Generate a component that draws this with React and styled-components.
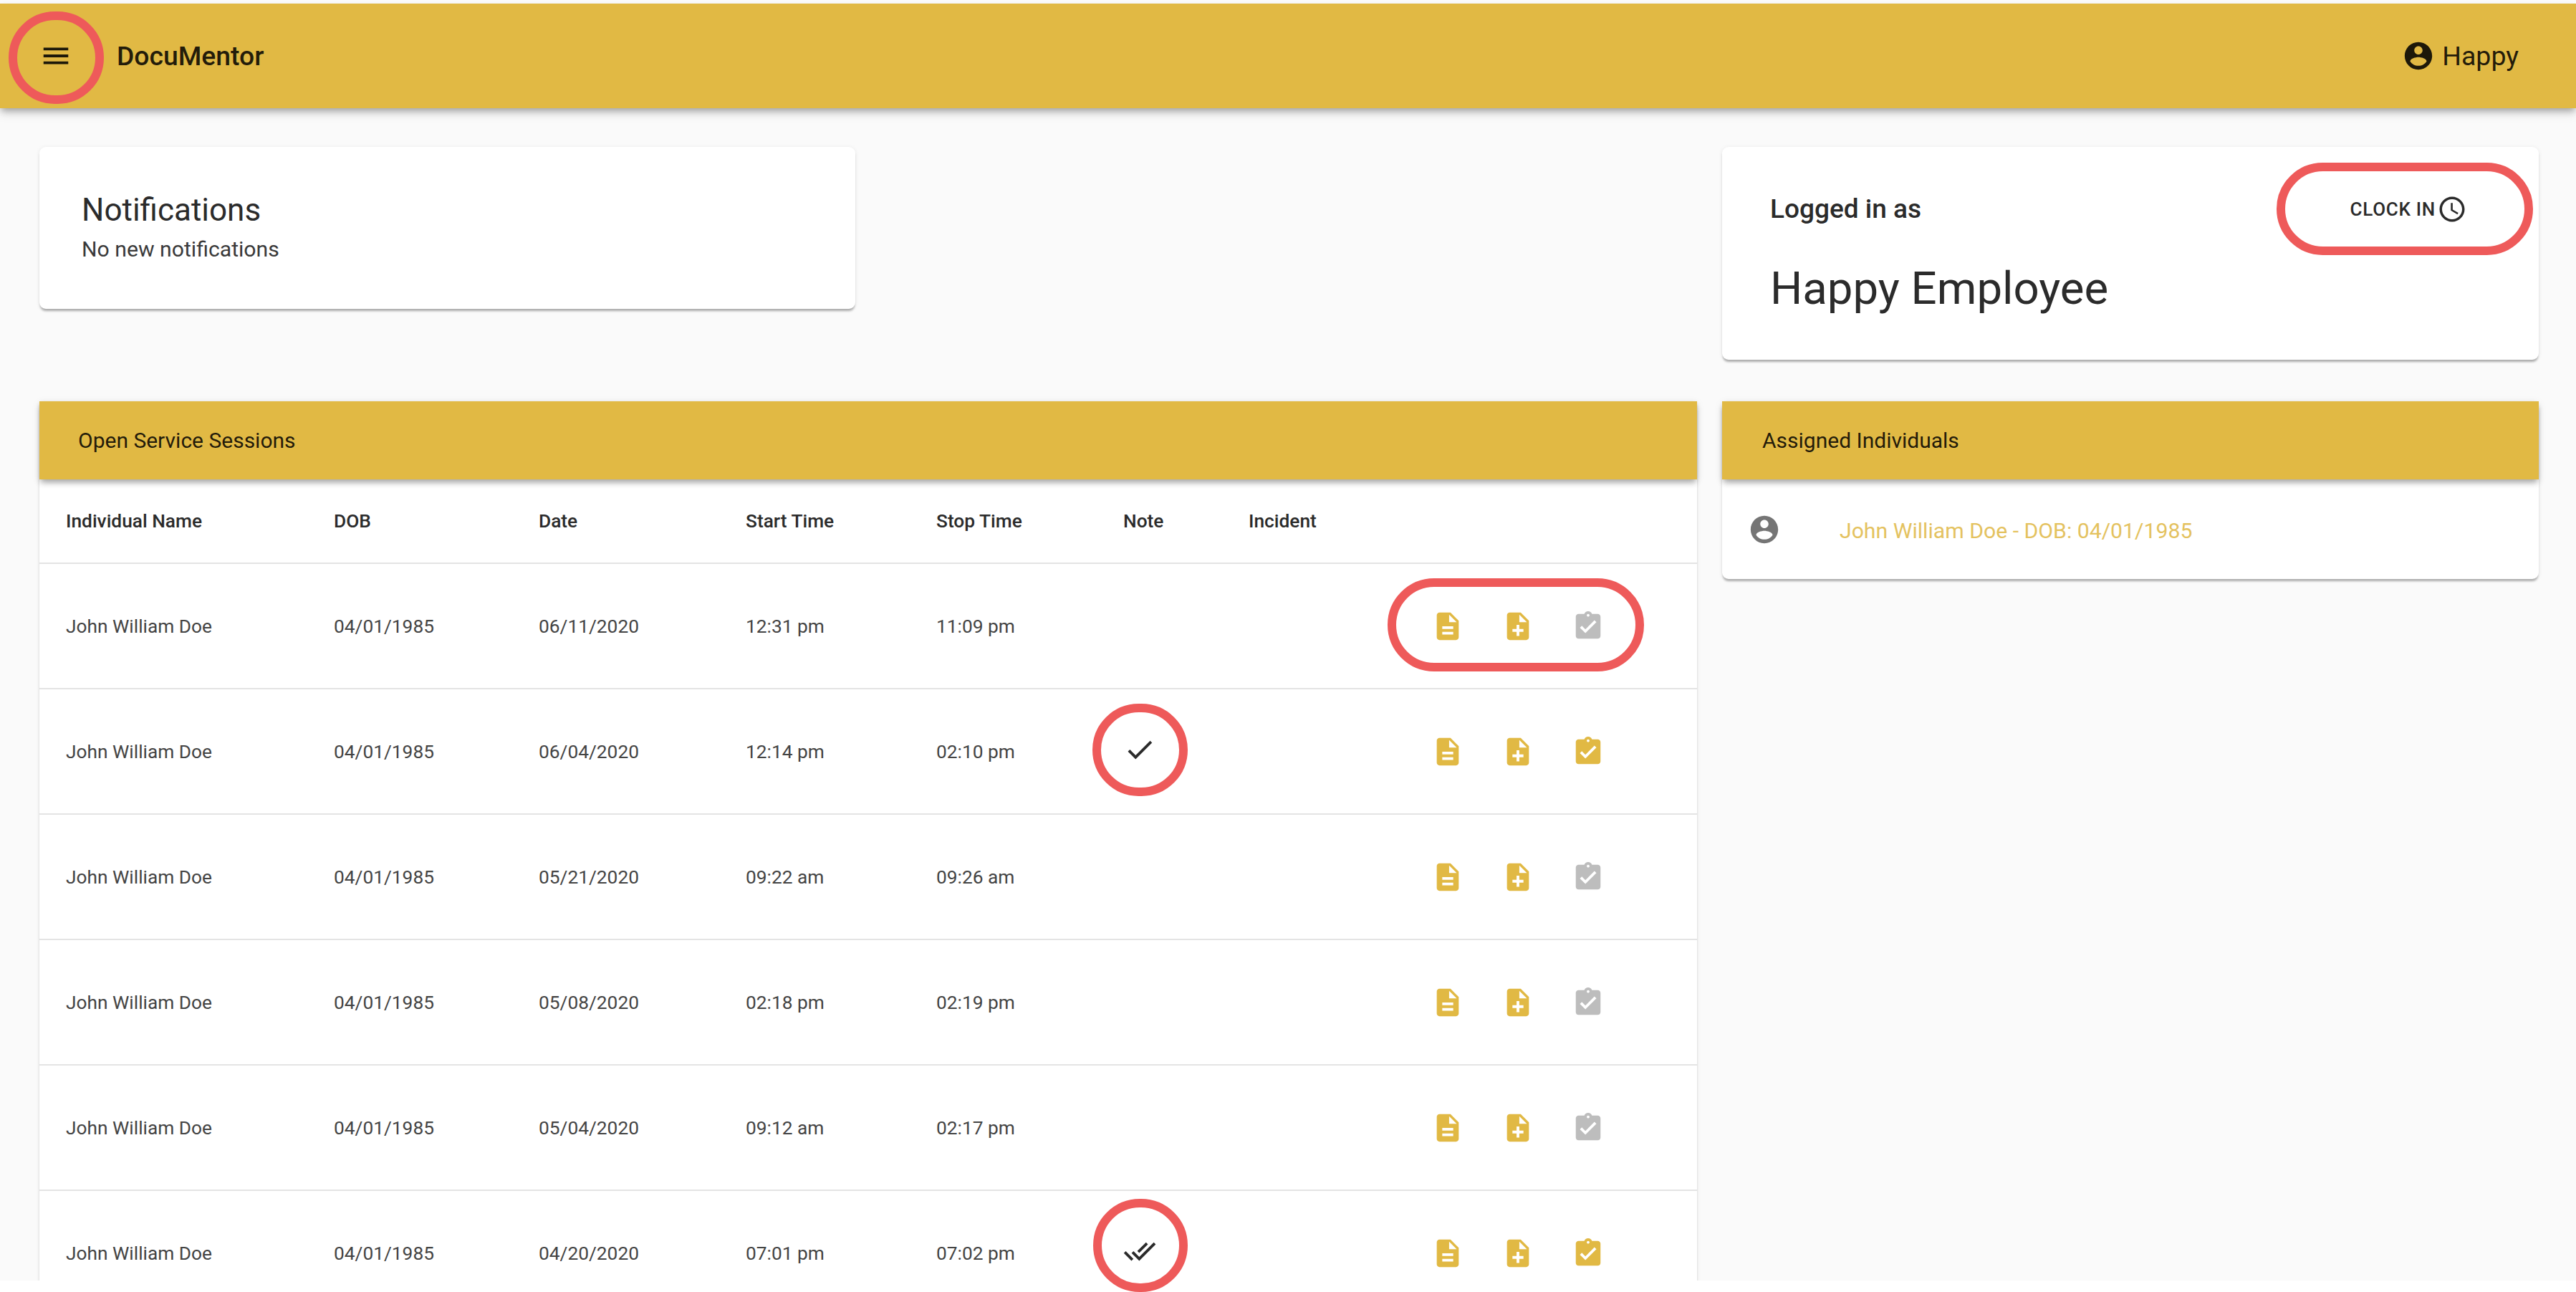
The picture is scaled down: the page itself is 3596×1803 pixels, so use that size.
import React from "react";
import styled, { createGlobalStyle } from "styled-components";

const GOLD = "#e1b944";
const RED = "#ee5a5a";
const TEXT = "rgba(0, 0, 0, 0.87)";
const ROW_COLUMNS = "374px 286px 289px 266px 261px 175px 255px 1fr";

const ICONS = {
  menu: "M3 18h18v-2H3v2zm0-5h18v-2H3v2zm0-7v2h18V6H3z",
  account:
    "M12 2C6.48 2 2 6.48 2 12s4.48 10 10 10 10-4.48 10-10S17.52 2 12 2zm0 3c1.66 0 3 1.34 3 3s-1.34 3-3 3-3-1.34-3-3 1.34-3 3-3zm0 14.2c-2.5 0-4.71-1.28-6-3.22.03-1.99 4-3.08 6-3.08 1.99 0 5.97 1.09 6 3.08-1.29 1.94-3.5 3.22-6 3.22z",
  clock:
    "M11.99 2C6.47 2 2 6.48 2 12s4.47 10 9.99 10C17.52 22 22 17.52 22 12S17.52 2 11.99 2zM12 20c-4.42 0-8-3.58-8-8s3.58-8 8-8 8 3.58 8 8-3.58 8-8 8zm.5-13H11v6l5.25 3.15.75-1.23-4.5-2.67z",
  description:
    "M14 2H6c-1.1 0-1.99.9-1.99 2L4 20c0 1.1.89 2 1.99 2H18c1.1 0 2-.9 2-2V8l-6-6zm2 16H8v-2h8v2zm0-4H8v-2h8v2zm-3-5V3.5L18.5 9H13z",
  noteAdd:
    "M14 2H6c-1.1 0-1.99.9-1.99 2L4 20c0 1.1.89 2 1.99 2H18c1.1 0 2-.9 2-2V8l-6-6zm2 14h-3v3h-2v-3H8v-2h3v-3h2v3h3v2zm-3-7V3.5L18.5 9H13z",
  assignment:
    "M19 3h-4.18C14.4 1.84 13.3 1 12 1c-1.3 0-2.4.84-2.82 2H5c-1.1 0-2 .9-2 2v14c0 1.1.9 2 2 2h14c1.1 0 2-.9 2-2V5c0-1.1-.9-2-2-2zm-7 0c.55 0 1 .45 1 1s-.45 1-1 1-1-.45-1-1 .45-1 1-1zm-2 14l-4-4 1.41-1.41L10 14.17l6.59-6.59L18 9l-8 8z",
  check: "M9 16.17L4.83 12l-1.42 1.41L9 19 21 7l-1.41-1.41z",
  doneAll:
    "M18 7l-1.41-1.41-6.34 6.34 1.41 1.41L18 7zm4.24-1.41L11.66 16.17 7.48 12l-1.41 1.41L11.66 19l12-12-1.42-1.41zM.41 13.41L6 19l1.41-1.41L1.83 12 .41 13.41z",
};

const sessions = [
  { date: "06/11/2020", start: "12:31 pm", stop: "11:09 pm", note: null, signed: false },
  { date: "06/04/2020", start: "12:14 pm", stop: "02:10 pm", note: "check", signed: true },
  { date: "05/21/2020", start: "09:22 am", stop: "09:26 am", note: null, signed: false },
  { date: "05/08/2020", start: "02:18 pm", stop: "02:19 pm", note: null, signed: false },
  { date: "05/04/2020", start: "09:12 am", stop: "02:17 pm", note: null, signed: false },
  { date: "04/20/2020", start: "07:01 pm", stop: "07:02 pm", note: "doneAll", signed: true },
];

const GlobalStyle = createGlobalStyle`
  html, body {
    margin: 0;
    height: 1803px;
    overflow: hidden;
    background: #fff;
    font-family: Roboto, "Liberation Sans", sans-serif;
  }
`;

const Page = styled.div`
  position: relative;
  width: 3596px;
  height: 1803px;
`;

const Screen = styled.div`
  height: 1787px;
  padding-top: 5px;
  box-sizing: border-box;
  background: #fafafa;
  overflow: hidden;
`;

const Icon = styled.svg`
  display: block;
  flex: none;
  width: ${({ $size }) => $size || 46}px;
  height: ${({ $size }) => $size || 46}px;
  fill: ${({ $color }) => $color || "currentColor"};
`;

const Glyph = ({ name, size, color }) => (
  <Icon viewBox="0 0 24 24" $size={size} $color={color}>
    <path d={ICONS[name]} />
  </Icon>
);

const AppBar = styled.header`
  position: relative;
  display: flex;
  align-items: center;
  height: 146px;
  padding: 0 80px 0 55px;
  background: ${GOLD};
  color: ${TEXT};
  box-shadow: 0 5px 9px -2px rgba(0, 0, 0, 0.3), 0 9px 12px 0 rgba(0, 0, 0, 0.1);
`;

const Brand = styled.div`
  margin-left: 62px;
  font-size: 37.3px;
  font-weight: 500;
  flex: 1;
`;

const UserMenu = styled.div`
  display: flex;
  align-items: center;
  gap: 10px;
  font-size: 37.5px;
`;

const Content = styled.main`
  display: grid;
  grid-template-columns: 2314px 1140px;
  grid-template-rows: 297px auto;
  gap: 58px 35px;
  padding: 54px 0 0 55px;
`;

const Card = styled.section`
  position: relative;
  background: #fff;
  border-radius: 9px;
  box-shadow: 0 4px 3px -1px rgba(0, 0, 0, 0.28), 0 1px 6px 0 rgba(0, 0, 0, 0.08);
`;

const NotificationCard = styled(Card)`
  width: 1139px;
  height: 226px;
  padding: 61px 59px 0;
  box-sizing: border-box;
`;

const CardTitle = styled.div`
  font-size: 44px;
  line-height: 54px;
  color: #2b2b2b;
`;

const CardBody = styled.div`
  margin-top: 9px;
  font-size: 30.2px;
  line-height: 38px;
  color: #3a3a3a;
`;

const ProfileCard = styled(Card)`
  padding: 61px 67px 0;
  box-sizing: border-box;
`;

const ProfileTop = styled.div`
  display: flex;
  align-items: center;
  justify-content: space-between;
  height: 50px;
`;

const LoggedLabel = styled.div`
  font-size: 37px;
  font-weight: 500;
  color: #2b2b2b;
`;

const ClockButton = styled.button`
  display: flex;
  align-items: center;
  gap: 2px;
  padding: 0;
  margin: 2px 33px 0 0;
  border: 0;
  background: none;
  font-family: inherit;
  font-size: 26px;
  font-weight: 500;
  letter-spacing: 0.7px;
  color: #2b2b2b;
`;

const EmployeeName = styled.div`
  margin-top: 47px;
  font-size: 63.5px;
  line-height: 80px;
  color: #2b2b2b;
`;

const SessionsCard = styled(Card)`
  border-radius: 0;
  min-height: 1300px;
`;

const AssignedCard = styled(Card)`
  align-self: start;
`;

const SectionHeader = styled.div`
  position: relative;
  display: flex;
  align-items: center;
  height: 109px;
  padding-left: ${({ $indent }) => $indent}px;
  background: ${GOLD};
  color: ${TEXT};
  font-size: 30px;
  box-shadow: 0 6px 8px -2px rgba(0, 0, 0, 0.32), 0 3px 12px 0 rgba(0, 0, 0, 0.08);
`;

const Row = styled.div`
  display: grid;
  grid-template-columns: ${ROW_COLUMNS};
  align-items: center;
  height: ${({ $head }) => ($head ? 118 : 175)}px;
  padding-left: 37px;
  box-sizing: border-box;
  border-bottom: 2px solid #e4e4e4;
  font-size: 26.3px;
  font-weight: ${({ $head }) => ($head ? 500 : 400)};
  color: ${({ $head }) => ($head ? "#2b2b2b" : "#444")};
`;

const NoteMark = styled.div`
  color: #2b2b2b;
  margin-bottom: 6px;
`;

const Actions = styled.div`
  display: flex;
  gap: 52px;
`;

const AssignedRow = styled.div`
  display: flex;
  align-items: center;
  height: 139px;
  padding-left: 36px;
  color: #e4c25f;
  font-size: 30.2px;
`;

const AssignedName = styled.span`
  margin: 4px 0 0 82px;
`;

const Annotation = styled.div`
  position: absolute;
  left: ${({ $x }) => $x}px;
  top: ${({ $y }) => $y}px;
  width: ${({ $w }) => $w}px;
  height: ${({ $h }) => $h}px;
  box-sizing: border-box;
  border: 12px solid ${RED};
  border-radius: 66px;
  pointer-events: none;
`;

const SessionRow = ({ session }) => (
  <Row>
    <span>John William Doe</span>
    <span>04/01/1985</span>
    <span>{session.date}</span>
    <span>{session.start}</span>
    <span>{session.stop}</span>
    <NoteMark>{session.note && <Glyph name={session.note} />}</NoteMark>
    <span />
    <Actions>
      <Glyph name="description" color={GOLD} />
      <Glyph name="noteAdd" color={GOLD} />
      <Glyph name="assignment" color={session.signed ? GOLD : "#bdbdbd"} />
    </Actions>
  </Row>
);

export default function App() {
  return (
    <Page>
      <GlobalStyle />
      <Screen>
        <AppBar>
          <Glyph name="menu" />
          <Brand>DocuMentor</Brand>
          <UserMenu>
            <Glyph name="account" />
            Happy
          </UserMenu>
        </AppBar>
        <Content>
          <NotificationCard>
            <CardTitle>Notifications</CardTitle>
            <CardBody>No new notifications</CardBody>
          </NotificationCard>
          <ProfileCard>
            <ProfileTop>
              <LoggedLabel>Logged in as</LoggedLabel>
              <ClockButton>
                CLOCK IN
                <Glyph name="clock" size={42} />
              </ClockButton>
            </ProfileTop>
            <EmployeeName>Happy Employee</EmployeeName>
          </ProfileCard>
          <SessionsCard>
            <SectionHeader $indent={54}>Open Service Sessions</SectionHeader>
            <Row $head>
              <span>Individual Name</span>
              <span>DOB</span>
              <span>Date</span>
              <span>Start Time</span>
              <span>Stop Time</span>
              <span>Note</span>
              <span>Incident</span>
              <span />
            </Row>
            {sessions.map((session) => (
              <SessionRow key={session.date} session={session} />
            ))}
          </SessionsCard>
          <AssignedCard>
            <SectionHeader $indent={56}>Assigned Individuals</SectionHeader>
            <AssignedRow>
              <Glyph name="account" color="#757575" />
              <AssignedName>John William Doe - DOB: 04/01/1985</AssignedName>
            </AssignedRow>
          </AssignedCard>
        </Content>
      </Screen>
      <Annotation $x={12} $y={16} $w={133} $h={129} />
      <Annotation $x={3178} $y={227} $w={358} $h={129} />
      <Annotation $x={1937} $y={807} $w={358} $h={130} />
      <Annotation $x={1525} $y={982} $w={133} $h={129} />
      <Annotation $x={1526} $y={1673} $w={132} $h={130} />
    </Page>
  );
}
